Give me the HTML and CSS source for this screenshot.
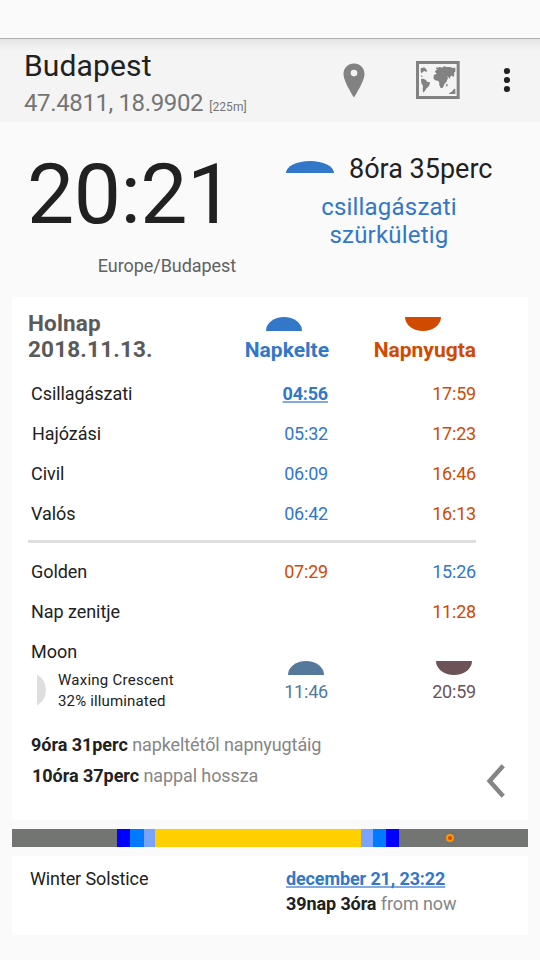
FILE: index.html
```html
<!DOCTYPE html>
<html lang="hu">
<head>
<meta charset="utf-8">
<title>Budapest</title>
<link rel="stylesheet" href="styles.css">
</head>
<body>
<header class="appbar">
  <div class="place">
    <h1 class="city">Budapest</h1>
    <div class="coords"><span class="latlon">47.4811, 18.9902</span><span class="alt">[225m]</span></div>
  </div>
  <svg class="pin" width="22" height="35" viewBox="0 0 22 35"><path fill="#828282" fill-rule="evenodd" d="M11 0.500C5 .5.5 5 .5 11c0 7.500 10.500 23.500 10.500 23.500S21.500 18.500 21.500 11C21.500 5 17 .5 11 .5zM11 6.800a3.300 3.300 0 1 1 0 6.600 3.300 3.300 0 0 1 0-6.600z"/></svg>
  <svg class="map" width="44" height="38" viewBox="0 0 132 114">
    <path fill="none" stroke="#828282" stroke-width="9" d="M4.500 4.500h122v105H4.500z"/>
    <g fill="#828282">
      <path d="M14 22l5-1 5-2 4 3 6 8-3 2-7-2-4 4-4 3-2-6zM14 42l5 3 2 4-6-3z"/>
      <path d="M15 54l7-1 8 4 3 5 9 2-1 6-4 8-5 3-4 7-4 6h-3l-1-10 1-9-5-8z"/>
      <path d="M54 41l10-3 11 1 7 2 11 1 3 9-5 12-6 6-2 7-4 5h-5l-4-9-1-10-4-3-8-1-5-7zM90 70l4-2 1 7-4 2z"/>
      <path d="M57 33l2-5 5-2 1-5 7-4 5 3 8-4 7 2 10 0 8 3 8-1v12l-4 3 1 6-3 8-4-5-4 1-3 9-6-8-8-4-7 2-5-4-6-1-4 2zM60 20l5-1v5l-4 1z"/>
      <path d="M99 97l8-5 4-4 3-5 4 1v15H99z"/>
    </g>
  </svg>
  <svg class="more" width="8" height="26" viewBox="0 0 8 26" fill="#212121"><circle cx="4" cy="4" r="3.100"/><circle cx="4" cy="13" r="3.100"/><circle cx="4" cy="22" r="3.100"/></svg>
</header>

<section class="now">
  <div class="clock-col">
    <div class="clock">20:21</div>
    <div class="zone">Europe/Budapest</div>
  </div>
  <div class="next-col">
    <div class="remaining"><span class="dome rise wide"></span><span class="duration">8óra 35perc</span></div>
    <div class="event">csillagászati<br>szürkületig</div>
  </div>
</section>

<main class="card day">
  <div class="head">
    <div class="date"><span class="word">Holnap</span><br>2018.11.13.</div>
    <div class="col-head blue"><span class="dome rise"></span><span class="rise-label">Napkelte</span></div>
    <div class="col-head orange"><span class="dome set"></span><span class="set-label">Napnyugta</span></div>
  </div>
  <div class="row"><span class="lb">Csillagászati</span><a class="blue key">04:56</a><span class="orange">17:59</span></div>
  <div class="row"><span class="lb haj">Hajózási</span><span class="blue">05:32</span><span class="orange">17:23</span></div>
  <div class="row"><span class="lb">Civil</span><span class="blue">06:09</span><span class="orange">16:46</span></div>
  <div class="row"><span class="lb">Valós</span><span class="blue">06:42</span><span class="orange">16:13</span></div>
  <div class="rule"></div>
  <div class="row"><span class="lb">Golden</span><span class="orange">07:29</span><span class="blue">15:26</span></div>
  <div class="row"><span class="lb">Nap zenitje</span><span></span><span class="orange">11:28</span></div>
  <div class="moon">
    <div class="moon-info">
      <div class="moon-name">Moon</div>
      <div class="phase">
        <svg width="10" height="32" viewBox="0 0 10 32"><path fill="#dedede" d="M0 .5Q9 6 9 16T0 31.500z"/></svg>
        <div class="phase-text"><span class="waxing">Waxing Crescent</span><br><span class="illum">32% illuminated</span></div>
      </div>
    </div>
    <div class="moon-time moonrise"><span class="dome rise"></span><span>11:46</span></div>
    <div class="moon-time moonset"><span class="dome set"></span><span>20:59</span></div>
  </div>
  <div class="lengths">
    <div>
      <div class="length sunlight"><b>9óra 31perc</b> <span>napkeltétől napnyugtáig</span></div>
      <div class="length daylight"><b>10óra 37perc</b> <span>nappal hossza</span></div>
    </div>
    <svg class="chevron" width="20" height="34" viewBox="0 0 20 34"><path fill="none" stroke="#858585" stroke-width="4.500" d="M17.200 1.800L3.600 17l13.600 15.200"/></svg>
  </div>
</main>

<div class="lightmap">
  <i class="night dawn-night"></i><i class="astro a1"></i><i class="naut n1"></i><i class="civil c1"></i><i class="daytime"></i><i class="civil c2"></i><i class="naut n2"></i><i class="astro a2"></i><i class="night dusk-night"><svg width="10" height="10" viewBox="0 0 10 10"><circle cx="5" cy="5" r="3" fill="#d04a00" stroke="#ff9500" stroke-width="2"/></svg></i>
</div>

<section class="card solstice">
  <div class="season">Winter Solstice</div>
  <div class="when">
    <a class="blue key when-date">december 21, 23:22</a>
    <div class="from"><b>39nap 3óra</b> <span>from now</span></div>
  </div>
</section>
</body>
</html>
```

FILE: styles.css
```css
* { box-sizing: border-box; }
body {
  margin: 0;
  padding-top: 38px;
  width: 540px;
  height: 960px;
  overflow: hidden;
  background: #fafafa;
  color: #212121;
  font: 18px/40px Roboto, sans-serif;
}
svg { display: block; flex: none; }
.blue { color: #3277c8; }
.orange { color: #d04a00; }

.appbar {
  display: flex;
  align-items: flex-start;
  height: 84px;
  border-top: 1px solid #b0b0b0;
  background: linear-gradient(#e4e4e4, #f4f4f4 12px);
}
.place { width: 342px; padding: 9px 0 0 24px; }
.city { margin: 0; font-size: 30px; line-height: 36px; font-weight: 400; height: 40px; letter-spacing: .15px; }
.coords { font-size: 24px; line-height: 30px; color: #757575; white-space: nowrap; }
.latlon { letter-spacing: -.38px; }
.alt { font-size: 12px; margin-left: 6px; letter-spacing: .1px; }
.pin { margin: 24px 0 0 1px; }
.map { margin: 22px 0 0 51px; }
.more { margin: 28px 0 0 43px; }

.now { display: flex; height: 175px; }
.clock-col { width: 236px; padding-top: 23px; }
.clock { font-size: 84px; line-height: 100px; height: 109px; padding-left: 27px; letter-spacing: -.5px; }
.zone { line-height: 24px; color: #616161; text-align: right; letter-spacing: -.07px; }
.next-col { width: 206px; margin-left: 50px; padding-top: 29px; }
.remaining { display: flex; align-items: flex-start; font-size: 27px; line-height: 36px; height: 42px; white-space: nowrap; }
.duration { margin-left: 15px; }
.event { font-size: 24px; line-height: 28px; text-align: center; color: #3277c8; letter-spacing: .2px; }

.dome { display: block; flex: none; width: 36px; height: 14px; background: currentColor; }
.rise { border-radius: 50% 50% 0 0 / 100% 100% 0 0; }
.set { border-radius: 0 0 50% 50% / 0 0 100% 100%; }
.wide { width: 48px; height: 12px; margin-top: 10px; color: #3277c8; }

.card { margin: 0 12px; background: #fff; }
.day { height: 523px; padding: 13px 52px 0 16px; }
.head { display: grid; grid-template-columns: 191px 110px 147px; height: 64px; }
.date { font-size: 22.500px; line-height: 26px; font-weight: 700; color: #5a5a5a; letter-spacing: .18px; }
.col-head { display: flex; flex-direction: column; align-items: flex-end; padding-top: 7px; font-size: 21px; line-height: 25px; font-weight: 700; }
.col-head .dome { margin: 0 27px 7px 0; }
.col-head .set { margin-right: 35px; }

.row { display: grid; grid-template-columns: 152px 148px 148px; height: 40px; text-align: right; letter-spacing: -.2px; }
.lb { text-align: left; padding-left: 3px; letter-spacing: -.06px; }
.haj { padding-left: 4px; }
.key { font-weight: 700; text-decoration: underline; text-decoration-color: #84aade; text-decoration-thickness: 2px; text-underline-offset: 1px; text-decoration-skip-ink: none; }
.rule { height: 3px; margin: 6px 0 9px; background: #dfdfdf; }

.moon { display: grid; grid-template-columns: 152px 148px 148px; height: 97px; }
.moon-info { padding-left: 3px; white-space: nowrap; }
.moon-name { height: 38px; }
.phase { display: flex; font-size: 15px; line-height: 21px; }
.waxing { letter-spacing: .25px; }
.illum { letter-spacing: .15px; }
.phase svg { margin: 4px 11px 0 6px; }
.moon-time { display: flex; flex-direction: column; align-items: flex-end; padding-top: 29px; line-height: 24px; letter-spacing: -.2px; }
.moon-time .dome { margin: 0 4px 5px 0; }
.moonrise { color: #54799b; }
.moonset { color: #6d5257; }

.lengths { display: flex; padding-left: 3px; }
.length { line-height: 31px; white-space: nowrap; width: 456px; }
.length span, .from span { color: #858585; letter-spacing: -.1px; }
.length { letter-spacing: -.04px; }
.daylight { padding-left: 1px; }
.chevron { margin: 35px 0 0 -1px; }

.lightmap { display: flex; height: 18px; margin: 9px 12px; }
.night { background: #737572; }
.astro { background: #0000ff; }
.naut { background: #007aff; }
.civil { background: #7aa2ff; }
.daytime { width: 206px; background: #ffcf00; }
.dawn-night { width: 105px; }
.a1 { width: 13px; } .n1 { width: 14px; } .c1 { width: 11px; }
.c2 { width: 12px; } .n2 { width: 13px; } .a2 { width: 13px; }
.dusk-night { width: 129px; padding: 4px 0 0 46px; }

.solstice { display: flex; height: 79px; padding: 10px 18px; line-height: 25px; }
.season { width: 256px; letter-spacing: -.12px; }
.when-date { display: block; letter-spacing: -.12px; }
.from { letter-spacing: -.1px; }
```
